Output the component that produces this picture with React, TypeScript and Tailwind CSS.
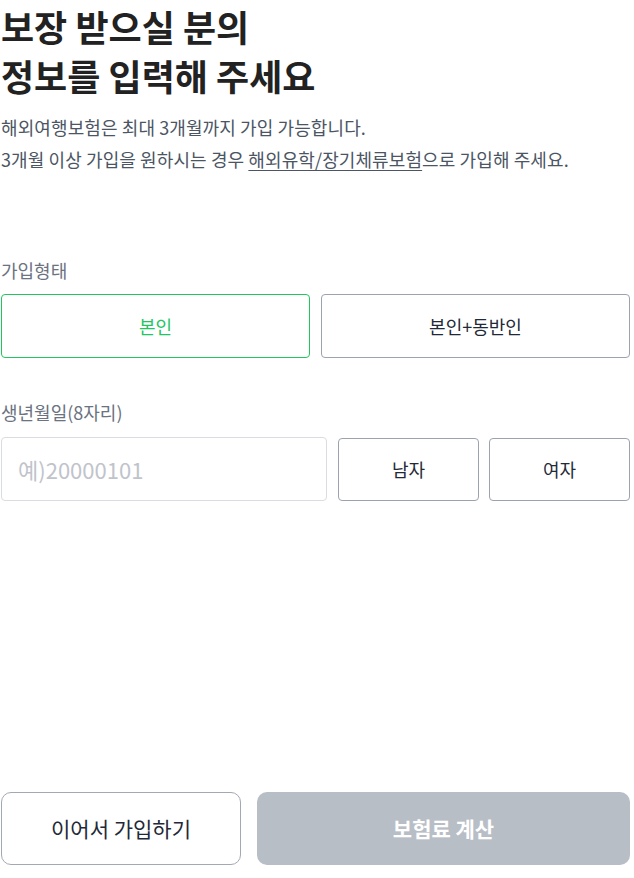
import React from "react";

export default function App() {
	return (
		<div
			className="w-[634px] h-[878px] flex flex-col bg-white pl-px pr-[4px] pb-[13px]"
			style={{ fontFamily: '"Noto Sans CJK KR", "Noto Sans", sans-serif' }}
		>
			{/* Heading */}
			<h1 className="text-[36px] font-bold text-[#222222]">
				<span className="block leading-[52px]">보장 받으실 분의</span>
				<span className="block leading-[52px] -mt-[3px]">정보를 입력해 주세요</span>
			</h1>
			<div className="mt-[10px] text-[18px] leading-[32px] text-[#4b5563] tracking-[0.1px]">
				<p>해외여행보험은 최대 3개월까지 가입 가능합니다.</p>
				<p>
					3개월 이상 가입을 원하시는 경우{" "}
					<a href="#" className="underline underline-offset-[3px] text-[#4b5563]">
						해외유학/장기체류보험
					</a>
					으로 가입해 주세요.
				</p>
			</div>

			{/* 가입형태 */}
			<div className="mt-[83px] text-[18px] leading-[24px] text-[#6b7280]">가입형태</div>
			<div className="mt-[12px] flex gap-[11px]">
				<button className="flex-1 h-[64px] rounded-[4px] border border-[#22c55e] text-[#22c55e] text-[18px]">
					본인
				</button>
				<button className="flex-1 h-[64px] rounded-[4px] border border-[#9ca3af] text-[#1f2937] text-[18px]">
					본인+동반인
				</button>
			</div>

			{/* 생년월일 */}
			<div className="mt-[42px] text-[18px] leading-[24px] text-[#6b7280]">생년월일(8자리)</div>
			<div className="mt-[13px] flex gap-[10px] items-start">
				<input
					placeholder="예)20000101"
					className="w-[326px] h-[64px] rounded-[4px] border border-[#d9dce1] px-[16px] text-[22px] placeholder:text-[#bfc4cb] outline-none"
				/>
				<button className="mt-[1px] ml-[1px] flex-1 h-[63px] rounded-[4px] border border-[#9ca3af] text-[#1f2937] text-[18px]">
					남자
				</button>
				<button className="mt-[1px] flex-1 h-[63px] rounded-[4px] border border-[#9ca3af] text-[#1f2937] text-[18px]">
					여자
				</button>
			</div>

			{/* Bottom actions */}
			<div className="mt-auto flex gap-[16px]">
				<button className="w-[240px] h-[73px] rounded-[10px] border border-[#a3a9b2] text-[#1f2937] text-[21px]">
					이어서 가입하기
				</button>
				<button className="flex-1 h-[73px] rounded-[10px] bg-[#b8bec6] text-white text-[21px] font-bold">
					보험료 계산
				</button>
			</div>
		</div>
	);
}
